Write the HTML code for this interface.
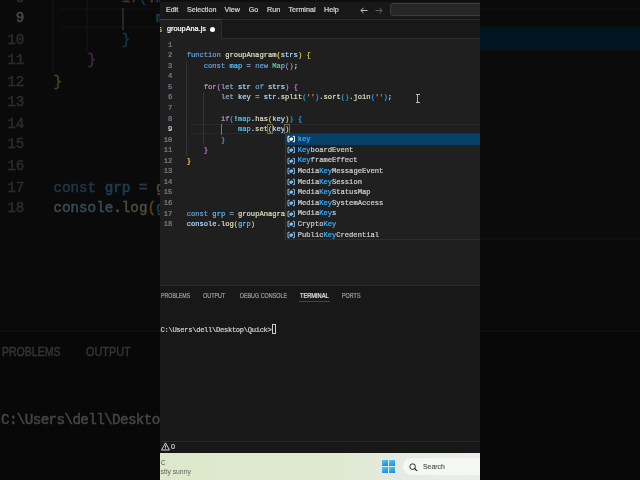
<!DOCTYPE html>
<html><head><meta charset="utf-8"><title>groupAna.js</title>
<style>
html,body{margin:0;padding:0;background:#0a0a0a;}
body{width:640px;height:480px;overflow:hidden;position:relative;font-family:"Liberation Sans",sans-serif;}
#bg{position:absolute;left:0;top:-240px;width:320px;height:480px;transform:scale(2);transform-origin:0 0;overflow:hidden;filter:brightness(.33) blur(.3px);}
#fg{position:absolute;left:160px;top:0;width:320px;height:480px;overflow:hidden;filter:blur(.3px);}
.p{position:absolute;left:0;top:0;width:320px;height:480px;overflow:hidden;background:#1f1f1f;color:#ccc;-webkit-text-stroke:.22px;}
.p div,.p svg{position:absolute;}
.title{left:0;top:0;width:320px;height:19px;background:#181818;border-bottom:1px solid #2b2b2b;}
.frame{left:0;top:0;width:320px;height:2px;background:#0e0e0e;}
.menu{top:5.7px;font-size:7.15px;line-height:9px;color:#d4d4d4;white-space:nowrap;}
.search{left:229.5px;top:2.9px;width:100px;height:11.5px;border:.6px solid #3c3c3c;border-radius:3px;background:#262626;}
.tabbar{left:0;top:20px;width:320px;height:18px;background:#181818;border-bottom:.8px solid #2b2b2b;}
.tab{left:0;top:19px;width:60.5px;height:18.8px;background:#1f1f1f;border-top:.6px solid #0c4c80;border-right:.6px solid #2b2b2b;}
.js{position:absolute;left:-6.6px;top:6px;font-size:7.4px;font-weight:bold;color:#cbcb41;line-height:8px;letter-spacing:-.2px;-webkit-text-stroke:0;}
.tname{position:absolute;left:7px;top:4.4px;font-size:7.3px;line-height:9px;color:#fff;white-space:nowrap;}
.dot{position:absolute;left:49.8px;top:6.8px;width:5.2px;height:5.2px;border-radius:50%;background:#fff;}
.editor{left:0;top:39px;width:320px;height:246px;background:#1f1f1f;}
.curline{left:30px;width:290px;box-sizing:border-box;border-top:.7px solid #292929;border-bottom:.7px solid #292929;}
.guide{width:.6px;background:#343434;}
.guide.act{background:#767676;}
.ln,.cl,.row,.term{font-family:"Liberation Mono",monospace;font-size:7.132px;line-height:10.55px;height:10.55px;white-space:pre;}
.ln{left:0;width:12.2px;text-align:right;color:#7c8188;}
.ln.cur{color:#d6d6d6;}
.cl{left:26.7px;color:#d4d4d4;}
.k{color:#64a0d6}.c{color:#c693bb}.k2{color:#8eaac6}.eq{color:#8caad0}.f{color:#dedebc}.v{color:#addcf8}.n{color:#4fc1ff}.t{color:#4ec9b0}.s{color:#ce9178}
.b1{color:#ecd04a}.b2{color:#d078cc}.b3{color:#2f9ff0}
.bm{outline:.45px solid #6a6a6a;outline-offset:-.5px;}
.ibeam{left:256.2px;top:93.8px;width:3.4px;height:8.6px;}
.ibeam i{position:absolute;left:1.25px;top:0;width:.9px;height:8.6px;background:#b8b8b8;}
.ibeam b{position:absolute;left:0;top:0;width:3.4px;height:.8px;background:#b8b8b8;}
.ibeam u{position:absolute;left:0;bottom:0;width:3.4px;height:.8px;background:#b8b8b8;}
.pop{left:125.1px;top:133.2px;width:200px;height:107px;background:#202020;border:.5px solid #2c2c2c;border-left:.5px solid #363636;box-sizing:border-box;}
.row{left:0;width:200px;color:#ccc;line-height:10.6px;height:10.6px;}
.row.sel{background:#063f68;color:#fff;}
.row em{font-style:normal;color:#37b0fc;}
.row .ic{left:1.2px;top:1.3px;width:8.4px;height:8px;stroke:#80bff2;fill:#80bff2;}
.row.sel .ic{stroke:#fff;fill:#fff;}
.lb{position:absolute;left:11.7px;top:0;}
.panel{left:0;top:285px;width:320px;height:156px;background:#181818;border-top:.8px solid #2b2b2b;}
.pt{transform-origin:0 0;top:291px;font-size:6.5px;line-height:9px;color:#9d9d9d;white-space:nowrap;}
.pt.on{color:#e7e7e7;}
.pul{left:139.3px;top:300.9px;width:30.4px;height:.6px;background:#17507c;}
.term{left:.5px;top:324.9px;color:#ccc;letter-spacing:-.31px;}
.tcur{left:112px;top:324.2px;width:4.2px;height:9.4px;box-sizing:border-box;border:.6px solid #ccc;}
.status{left:0;top:440.6px;width:320px;height:12px;background:#181818;border-top:.8px solid #2b2b2b;}
.warn{left:.5px;top:442.1px;width:9px;height:9px;}
.st0{left:10.9px;top:442.2px;font-size:7.2px;line-height:9px;color:#d0d0d0;}
.task{left:0;top:452.8px;width:320px;height:28px;background:linear-gradient(90deg,#dde8cb 0%,#dfe9cf 55%,#e2e9d8 66%,#e6eae6 76%,#eaedec 100%);}
.wc{left:.8px;top:457.7px;font-size:6.8px;line-height:9px;color:#3a4230;-webkit-text-stroke:0;transform:scaleX(.85);transform-origin:0 0;}
.ws{left:.6px;top:466.8px;font-size:6.8px;line-height:9px;color:#626262;white-space:nowrap;-webkit-text-stroke:0;}
.win{left:221.6px;top:459.8px;width:13.6px;height:13.2px;}
.win i{position:absolute;width:6.55px;height:6.35px;background:linear-gradient(160deg,#58c6f4,#1787dc);}
.win i:nth-child(1){left:0;top:0}.win i:nth-child(2){right:0;top:0}.win i:nth-child(3){left:0;bottom:0}.win i:nth-child(4){right:0;bottom:0}
.pill{left:243px;top:458px;width:120px;height:17.3px;border-radius:8.7px;background:#f5f7f2;}
.pill .mag{left:5.9px;top:4.7px;width:8.8px;height:8.8px;}
.pill span{position:absolute;left:20.2px;top:4.3px;font-size:8px;line-height:9px;color:#4a4a4a;-webkit-text-stroke:.1px;transform:scaleX(.865);transform-origin:0 0;}
</style></head>
<body>
<div id="bg"><div class="p">
<div class="title"></div>
<div class="frame"></div>
<div class="menu" style="left:6px">Edit</div>
<div class="menu" style="left:27px">Selection</div>
<div class="menu" style="left:64.5px">View</div>
<div class="menu" style="left:88.75px">Go</div>
<div class="menu" style="left:107px">Run</div>
<div class="menu" style="left:128.5px">Terminal</div>
<div class="menu" style="left:164px">Help</div>
<svg class="arr" style="left:200px;top:6.5px" width="8" height="7" viewBox="0 0 8 7"><path d="M7.5 3.5H1M3.6 0.8L0.9 3.5L3.6 6.2" fill="none" stroke="#cfcfcf" stroke-width="0.9"/></svg>
<svg class="arr" style="left:214.5px;top:6.5px" width="8" height="7" viewBox="0 0 8 7"><path d="M0.5 3.5H7M4.4 0.8L7.1 3.5L4.4 6.2" fill="none" stroke="#6a6a6a" stroke-width="0.9"/></svg>
<div class="search"></div>
<div class="tabbar"></div>
<div class="tab"><span class="js">JS</span><span class="tname">groupAna.js</span><span class="dot"></span></div>
<div class="editor"></div>
<div class="curline" style="top:123.90px;height:10.55px"></div>
<div class="guide" style="left:26.1px;top:60.80px;height:94.95px"></div>
<div class="guide" style="left:43px;top:92.45px;height:52.75px"></div>
<div class="guide act" style="left:61px;top:124.10px;height:10.55px"></div>
<div class="ln" style="top:39.70px">1</div>
<div class="ln" style="top:50.25px">2</div>
<div class="ln" style="top:60.80px">3</div>
<div class="ln" style="top:71.35px">4</div>
<div class="ln" style="top:81.90px">5</div>
<div class="ln" style="top:92.45px">6</div>
<div class="ln" style="top:103.00px">7</div>
<div class="ln" style="top:113.55px">8</div>
<div class="ln cur" style="top:124.10px">9</div>
<div class="ln" style="top:134.65px">10</div>
<div class="ln" style="top:145.20px">11</div>
<div class="ln" style="top:155.75px">12</div>
<div class="ln" style="top:166.30px">13</div>
<div class="ln" style="top:176.85px">14</div>
<div class="ln" style="top:187.40px">15</div>
<div class="ln" style="top:197.95px">16</div>
<div class="ln" style="top:208.50px">17</div>
<div class="ln" style="top:219.05px">18</div>
<div class="cl" style="top:50.25px"><span class="k">function</span> <span class="f">groupAnagram</span><span class="b1">(</span><span class="v">strs</span><span class="b1">)</span> <span class="b1">{</span></div>
<div class="cl" style="top:60.80px">    <span class="k">const</span> <span class="n">map</span> <span class="eq">=</span> <span class="k">new</span> <span class="t">Map</span><span class="b2">()</span>;</div>
<div class="cl" style="top:81.90px">    <span class="c">for</span><span class="b2">(</span><span class="k2">let</span> <span class="v">str</span> <span class="k">of</span> <span class="v">strs</span><span class="b2">)</span> <span class="b2">{</span></div>
<div class="cl" style="top:92.45px">        <span class="k2">let</span> <span class="v">key</span> <span class="eq">=</span> <span class="v">str</span>.<span class="f">split</span><span class="b3">(</span><span class="s">''</span><span class="b3">)</span>.<span class="f">sort</span><span class="b3">()</span>.<span class="f">join</span><span class="b3">(</span><span class="s">''</span><span class="b3">)</span>;</div>
<div class="cl" style="top:113.55px">        <span class="c">if</span><span class="b3">(</span>!<span class="n">map</span>.<span class="f">has</span><span class="b1">(</span><span class="v">key</span><span class="b1">)</span><span class="b3">)</span> <span class="b3">{</span></div>
<div class="cl" style="top:124.10px">            <span class="n">map</span>.<span class="f">set</span><span class="bm"><span class="b1">(</span></span><span class="v">key</span><span class="bm"><span class="b1">)</span></span></div>
<div class="cl" style="top:134.65px">        <span class="b3">}</span></div>
<div class="cl" style="top:145.20px">    <span class="b2">}</span></div>
<div class="cl" style="top:155.75px"><span class="b1">}</span></div>
<div class="cl" style="top:208.50px"><span class="k">const</span> <span class="n">grp</span> <span class="eq">=</span> <span class="f">groupAnagram</span><span class="b1">(</span><span class="b2">[</span><span class="s">"eat"</span></div>
<div class="cl" style="top:219.05px"><span class="v">console</span>.<span class="f">log</span><span class="b1">(</span><span class="n">grp</span><span class="b1">)</span></div>
<div class="ibeam"><i></i><b></b><u></u></div>
<div class="pop">
<div class="row sel" style="top:0.00px"><svg class="ic" viewBox="0 0 16 16"><path d="M4.8 2.6H1.6V13.4H4.8M11.2 2.6H14.4V13.4H11.2" fill="none" stroke-width="2"/><path d="M4.6 6.4L8.8 4.4L11.4 5.8V9.8L7.2 11.8L4.6 10.4Z" stroke="none"/></svg><span class="lb"><em>key</em></span></div>
<div class="row" style="top:10.60px"><svg class="ic" viewBox="0 0 16 16"><path d="M4.8 2.6H1.6V13.4H4.8M11.2 2.6H14.4V13.4H11.2" fill="none" stroke-width="2"/><path d="M4.6 6.4L8.8 4.4L11.4 5.8V9.8L7.2 11.8L4.6 10.4Z" stroke="none"/></svg><span class="lb"><em>Key</em>boardEvent</span></div>
<div class="row" style="top:21.20px"><svg class="ic" viewBox="0 0 16 16"><path d="M4.8 2.6H1.6V13.4H4.8M11.2 2.6H14.4V13.4H11.2" fill="none" stroke-width="2"/><path d="M4.6 6.4L8.8 4.4L11.4 5.8V9.8L7.2 11.8L4.6 10.4Z" stroke="none"/></svg><span class="lb"><em>Key</em>frameEffect</span></div>
<div class="row" style="top:31.80px"><svg class="ic" viewBox="0 0 16 16"><path d="M4.8 2.6H1.6V13.4H4.8M11.2 2.6H14.4V13.4H11.2" fill="none" stroke-width="2"/><path d="M4.6 6.4L8.8 4.4L11.4 5.8V9.8L7.2 11.8L4.6 10.4Z" stroke="none"/></svg><span class="lb">Media<em>Key</em>MessageEvent</span></div>
<div class="row" style="top:42.40px"><svg class="ic" viewBox="0 0 16 16"><path d="M4.8 2.6H1.6V13.4H4.8M11.2 2.6H14.4V13.4H11.2" fill="none" stroke-width="2"/><path d="M4.6 6.4L8.8 4.4L11.4 5.8V9.8L7.2 11.8L4.6 10.4Z" stroke="none"/></svg><span class="lb">Media<em>Key</em>Session</span></div>
<div class="row" style="top:53.00px"><svg class="ic" viewBox="0 0 16 16"><path d="M4.8 2.6H1.6V13.4H4.8M11.2 2.6H14.4V13.4H11.2" fill="none" stroke-width="2"/><path d="M4.6 6.4L8.8 4.4L11.4 5.8V9.8L7.2 11.8L4.6 10.4Z" stroke="none"/></svg><span class="lb">Media<em>Key</em>StatusMap</span></div>
<div class="row" style="top:63.60px"><svg class="ic" viewBox="0 0 16 16"><path d="M4.8 2.6H1.6V13.4H4.8M11.2 2.6H14.4V13.4H11.2" fill="none" stroke-width="2"/><path d="M4.6 6.4L8.8 4.4L11.4 5.8V9.8L7.2 11.8L4.6 10.4Z" stroke="none"/></svg><span class="lb">Media<em>Key</em>SystemAccess</span></div>
<div class="row" style="top:74.20px"><svg class="ic" viewBox="0 0 16 16"><path d="M4.8 2.6H1.6V13.4H4.8M11.2 2.6H14.4V13.4H11.2" fill="none" stroke-width="2"/><path d="M4.6 6.4L8.8 4.4L11.4 5.8V9.8L7.2 11.8L4.6 10.4Z" stroke="none"/></svg><span class="lb">Media<em>Key</em>s</span></div>
<div class="row" style="top:84.80px"><svg class="ic" viewBox="0 0 16 16"><path d="M4.8 2.6H1.6V13.4H4.8M11.2 2.6H14.4V13.4H11.2" fill="none" stroke-width="2"/><path d="M4.6 6.4L8.8 4.4L11.4 5.8V9.8L7.2 11.8L4.6 10.4Z" stroke="none"/></svg><span class="lb">Crypto<em>Key</em></span></div>
<div class="row" style="top:95.40px"><svg class="ic" viewBox="0 0 16 16"><path d="M4.8 2.6H1.6V13.4H4.8M11.2 2.6H14.4V13.4H11.2" fill="none" stroke-width="2"/><path d="M4.6 6.4L8.8 4.4L11.4 5.8V9.8L7.2 11.8L4.6 10.4Z" stroke="none"/></svg><span class="lb">Public<em>Key</em>Credential</span></div>
</div>
<div class="panel"></div>
<div class="pt" style="left:0.6px;transform:scaleX(0.809)">PROBLEMS</div>
<div class="pt" style="left:43.3px;transform:scaleX(0.835)">OUTPUT</div>
<div class="pt" style="left:79.5px;transform:scaleX(0.831)">DEBUG CONSOLE</div>
<div class="pt on" style="left:140.2px;transform:scaleX(0.868)">TERMINAL</div>
<div class="pt" style="left:181.5px;transform:scaleX(0.831)">PORTS</div>
<div class="pul"></div>
<div class="term">C:\Users\dell\Desktop\Quick&gt;</div>
<div class="tcur"></div>
<div class="status"></div>
<svg class="warn" viewBox="0 0 16 16"><path d="M8 1.6L15 14.2H1Z" fill="none" stroke="#dadada" stroke-width="1.7" stroke-linejoin="round"/><path d="M8 6V10.2M8 11.4V12.8" stroke="#dadada" stroke-width="1.7"/></svg>
<div class="st0">0</div>
<div class="task"></div>
<div class="wc">C</div>
<div class="ws">stly sunny</div>
<div class="win"><i></i><i></i><i></i><i></i></div>
<div class="pill"><svg class="mag" viewBox="0 0 16 16"><circle cx="6.6" cy="6.6" r="5.1" fill="none" stroke="#1c1c1c" stroke-width="1.7"/><path d="M10.4 10.4L14.8 14.8" stroke="#1c1c1c" stroke-width="2" stroke-linecap="round"/></svg><span>Search</span></div>
</div></div>
<div id="fg"><div class="p">
<div class="title"></div>
<div class="frame"></div>
<div class="menu" style="left:6px">Edit</div>
<div class="menu" style="left:27px">Selection</div>
<div class="menu" style="left:64.5px">View</div>
<div class="menu" style="left:88.75px">Go</div>
<div class="menu" style="left:107px">Run</div>
<div class="menu" style="left:128.5px">Terminal</div>
<div class="menu" style="left:164px">Help</div>
<svg class="arr" style="left:200px;top:6.5px" width="8" height="7" viewBox="0 0 8 7"><path d="M7.5 3.5H1M3.6 0.8L0.9 3.5L3.6 6.2" fill="none" stroke="#cfcfcf" stroke-width="0.9"/></svg>
<svg class="arr" style="left:214.5px;top:6.5px" width="8" height="7" viewBox="0 0 8 7"><path d="M0.5 3.5H7M4.4 0.8L7.1 3.5L4.4 6.2" fill="none" stroke="#6a6a6a" stroke-width="0.9"/></svg>
<div class="search"></div>
<div class="tabbar"></div>
<div class="tab"><span class="js">JS</span><span class="tname">groupAna.js</span><span class="dot"></span></div>
<div class="editor"></div>
<div class="curline" style="top:123.90px;height:10.55px"></div>
<div class="guide" style="left:26.1px;top:60.80px;height:94.95px"></div>
<div class="guide" style="left:43px;top:92.45px;height:52.75px"></div>
<div class="guide act" style="left:61px;top:124.10px;height:10.55px"></div>
<div class="ln" style="top:39.70px">1</div>
<div class="ln" style="top:50.25px">2</div>
<div class="ln" style="top:60.80px">3</div>
<div class="ln" style="top:71.35px">4</div>
<div class="ln" style="top:81.90px">5</div>
<div class="ln" style="top:92.45px">6</div>
<div class="ln" style="top:103.00px">7</div>
<div class="ln" style="top:113.55px">8</div>
<div class="ln cur" style="top:124.10px">9</div>
<div class="ln" style="top:134.65px">10</div>
<div class="ln" style="top:145.20px">11</div>
<div class="ln" style="top:155.75px">12</div>
<div class="ln" style="top:166.30px">13</div>
<div class="ln" style="top:176.85px">14</div>
<div class="ln" style="top:187.40px">15</div>
<div class="ln" style="top:197.95px">16</div>
<div class="ln" style="top:208.50px">17</div>
<div class="ln" style="top:219.05px">18</div>
<div class="cl" style="top:50.25px"><span class="k">function</span> <span class="f">groupAnagram</span><span class="b1">(</span><span class="v">strs</span><span class="b1">)</span> <span class="b1">{</span></div>
<div class="cl" style="top:60.80px">    <span class="k">const</span> <span class="n">map</span> <span class="eq">=</span> <span class="k">new</span> <span class="t">Map</span><span class="b2">()</span>;</div>
<div class="cl" style="top:81.90px">    <span class="c">for</span><span class="b2">(</span><span class="k2">let</span> <span class="v">str</span> <span class="k">of</span> <span class="v">strs</span><span class="b2">)</span> <span class="b2">{</span></div>
<div class="cl" style="top:92.45px">        <span class="k2">let</span> <span class="v">key</span> <span class="eq">=</span> <span class="v">str</span>.<span class="f">split</span><span class="b3">(</span><span class="s">''</span><span class="b3">)</span>.<span class="f">sort</span><span class="b3">()</span>.<span class="f">join</span><span class="b3">(</span><span class="s">''</span><span class="b3">)</span>;</div>
<div class="cl" style="top:113.55px">        <span class="c">if</span><span class="b3">(</span>!<span class="n">map</span>.<span class="f">has</span><span class="b1">(</span><span class="v">key</span><span class="b1">)</span><span class="b3">)</span> <span class="b3">{</span></div>
<div class="cl" style="top:124.10px">            <span class="n">map</span>.<span class="f">set</span><span class="bm"><span class="b1">(</span></span><span class="v">key</span><span class="bm"><span class="b1">)</span></span></div>
<div class="cl" style="top:134.65px">        <span class="b3">}</span></div>
<div class="cl" style="top:145.20px">    <span class="b2">}</span></div>
<div class="cl" style="top:155.75px"><span class="b1">}</span></div>
<div class="cl" style="top:208.50px"><span class="k">const</span> <span class="n">grp</span> <span class="eq">=</span> <span class="f">groupAnagram</span><span class="b1">(</span><span class="b2">[</span><span class="s">"eat"</span></div>
<div class="cl" style="top:219.05px"><span class="v">console</span>.<span class="f">log</span><span class="b1">(</span><span class="n">grp</span><span class="b1">)</span></div>
<div class="ibeam"><i></i><b></b><u></u></div>
<div class="pop">
<div class="row sel" style="top:0.00px"><svg class="ic" viewBox="0 0 16 16"><path d="M4.8 2.6H1.6V13.4H4.8M11.2 2.6H14.4V13.4H11.2" fill="none" stroke-width="2"/><path d="M4.6 6.4L8.8 4.4L11.4 5.8V9.8L7.2 11.8L4.6 10.4Z" stroke="none"/></svg><span class="lb"><em>key</em></span></div>
<div class="row" style="top:10.60px"><svg class="ic" viewBox="0 0 16 16"><path d="M4.8 2.6H1.6V13.4H4.8M11.2 2.6H14.4V13.4H11.2" fill="none" stroke-width="2"/><path d="M4.6 6.4L8.8 4.4L11.4 5.8V9.8L7.2 11.8L4.6 10.4Z" stroke="none"/></svg><span class="lb"><em>Key</em>boardEvent</span></div>
<div class="row" style="top:21.20px"><svg class="ic" viewBox="0 0 16 16"><path d="M4.8 2.6H1.6V13.4H4.8M11.2 2.6H14.4V13.4H11.2" fill="none" stroke-width="2"/><path d="M4.6 6.4L8.8 4.4L11.4 5.8V9.8L7.2 11.8L4.6 10.4Z" stroke="none"/></svg><span class="lb"><em>Key</em>frameEffect</span></div>
<div class="row" style="top:31.80px"><svg class="ic" viewBox="0 0 16 16"><path d="M4.8 2.6H1.6V13.4H4.8M11.2 2.6H14.4V13.4H11.2" fill="none" stroke-width="2"/><path d="M4.6 6.4L8.8 4.4L11.4 5.8V9.8L7.2 11.8L4.6 10.4Z" stroke="none"/></svg><span class="lb">Media<em>Key</em>MessageEvent</span></div>
<div class="row" style="top:42.40px"><svg class="ic" viewBox="0 0 16 16"><path d="M4.8 2.6H1.6V13.4H4.8M11.2 2.6H14.4V13.4H11.2" fill="none" stroke-width="2"/><path d="M4.6 6.4L8.8 4.4L11.4 5.8V9.8L7.2 11.8L4.6 10.4Z" stroke="none"/></svg><span class="lb">Media<em>Key</em>Session</span></div>
<div class="row" style="top:53.00px"><svg class="ic" viewBox="0 0 16 16"><path d="M4.8 2.6H1.6V13.4H4.8M11.2 2.6H14.4V13.4H11.2" fill="none" stroke-width="2"/><path d="M4.6 6.4L8.8 4.4L11.4 5.8V9.8L7.2 11.8L4.6 10.4Z" stroke="none"/></svg><span class="lb">Media<em>Key</em>StatusMap</span></div>
<div class="row" style="top:63.60px"><svg class="ic" viewBox="0 0 16 16"><path d="M4.8 2.6H1.6V13.4H4.8M11.2 2.6H14.4V13.4H11.2" fill="none" stroke-width="2"/><path d="M4.6 6.4L8.8 4.4L11.4 5.8V9.8L7.2 11.8L4.6 10.4Z" stroke="none"/></svg><span class="lb">Media<em>Key</em>SystemAccess</span></div>
<div class="row" style="top:74.20px"><svg class="ic" viewBox="0 0 16 16"><path d="M4.8 2.6H1.6V13.4H4.8M11.2 2.6H14.4V13.4H11.2" fill="none" stroke-width="2"/><path d="M4.6 6.4L8.8 4.4L11.4 5.8V9.8L7.2 11.8L4.6 10.4Z" stroke="none"/></svg><span class="lb">Media<em>Key</em>s</span></div>
<div class="row" style="top:84.80px"><svg class="ic" viewBox="0 0 16 16"><path d="M4.8 2.6H1.6V13.4H4.8M11.2 2.6H14.4V13.4H11.2" fill="none" stroke-width="2"/><path d="M4.6 6.4L8.8 4.4L11.4 5.8V9.8L7.2 11.8L4.6 10.4Z" stroke="none"/></svg><span class="lb">Crypto<em>Key</em></span></div>
<div class="row" style="top:95.40px"><svg class="ic" viewBox="0 0 16 16"><path d="M4.8 2.6H1.6V13.4H4.8M11.2 2.6H14.4V13.4H11.2" fill="none" stroke-width="2"/><path d="M4.6 6.4L8.8 4.4L11.4 5.8V9.8L7.2 11.8L4.6 10.4Z" stroke="none"/></svg><span class="lb">Public<em>Key</em>Credential</span></div>
</div>
<div class="panel"></div>
<div class="pt" style="left:0.6px;transform:scaleX(0.809)">PROBLEMS</div>
<div class="pt" style="left:43.3px;transform:scaleX(0.835)">OUTPUT</div>
<div class="pt" style="left:79.5px;transform:scaleX(0.831)">DEBUG CONSOLE</div>
<div class="pt on" style="left:140.2px;transform:scaleX(0.868)">TERMINAL</div>
<div class="pt" style="left:181.5px;transform:scaleX(0.831)">PORTS</div>
<div class="pul"></div>
<div class="term">C:\Users\dell\Desktop\Quick&gt;</div>
<div class="tcur"></div>
<div class="status"></div>
<svg class="warn" viewBox="0 0 16 16"><path d="M8 1.6L15 14.2H1Z" fill="none" stroke="#dadada" stroke-width="1.7" stroke-linejoin="round"/><path d="M8 6V10.2M8 11.4V12.8" stroke="#dadada" stroke-width="1.7"/></svg>
<div class="st0">0</div>
<div class="task"></div>
<div class="wc">C</div>
<div class="ws">stly sunny</div>
<div class="win"><i></i><i></i><i></i><i></i></div>
<div class="pill"><svg class="mag" viewBox="0 0 16 16"><circle cx="6.6" cy="6.6" r="5.1" fill="none" stroke="#1c1c1c" stroke-width="1.7"/><path d="M10.4 10.4L14.8 14.8" stroke="#1c1c1c" stroke-width="2" stroke-linecap="round"/></svg><span>Search</span></div>
</div></div>
</body></html>
